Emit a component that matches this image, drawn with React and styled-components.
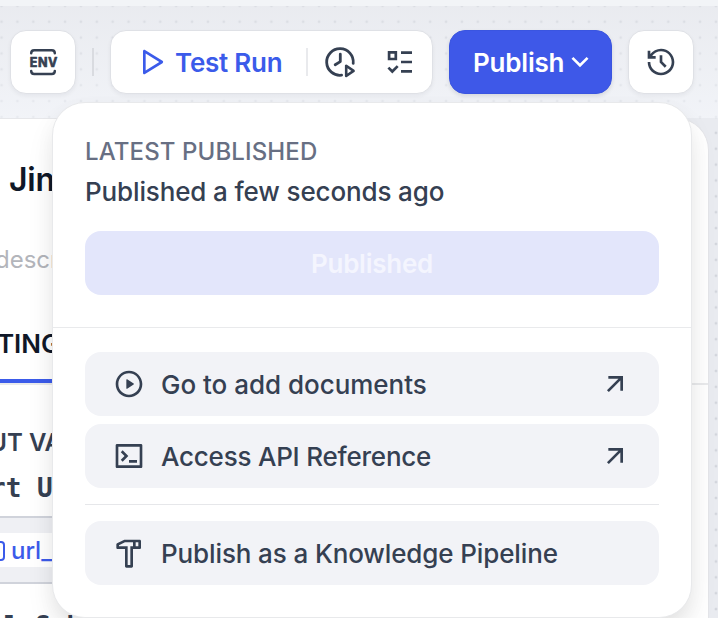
import React from "react";
import styled, { createGlobalStyle, css } from "styled-components";
import {
  RiPlayLargeLine,
  RiHistoryLine,
  RiArrowDownSLine,
  RiPlayCircleLine,
  RiTerminalBoxLine,
  RiHammerLine,
  RiArrowRightUpLine,
} from "react-icons/ri";

const GlobalStyle = createGlobalStyle`
  * { box-sizing: border-box; }
  body {
    margin: 0;
    font-family: Inter, "Liberation Sans", sans-serif;
    color: #354052;
    -webkit-font-smoothing: antialiased;
  }
`;

const Screen = styled.div`
  position: relative;
  display: flex;
  flex-direction: column;
  width: 718px;
  height: 618px;
  overflow: hidden;
  background: #f2f4f7;
  padding-top: 6px;
`;

const Canvas = styled.div`
  flex: 1;
  min-height: 0;
  display: flex;
  flex-direction: column;
  background-color: #e9ebf0;
  background-image: radial-gradient(circle, #d2d5dc 1.1px, transparent 1.7px);
  background-size: 15.89px 15.89px;
  background-position: -6.4px -8.1px;
`;

const Toolbar = styled.header`
  display: flex;
  align-items: flex-start;
  height: 112px;
  flex: none;
  padding: 24px 24px 0 10px;
  background: linear-gradient(rgba(234, 235, 239, 0.3), rgba(247, 249, 253, 0.6));
`;

const surface = css`
  background: #fff;
  border: 1px solid #dfe1e6;
  border-radius: 16px;
  box-shadow: 0 2px 4px rgba(16, 24, 40, 0.05);
`;

const IconButton = styled.button`
  ${surface}
  display: grid;
  place-items: center;
  width: 66px;
  height: 64px;
  padding: 0;
  color: #354052;
`;

const Separator = styled.span`
  width: 2px;
  height: 28px;
  margin: 18px 16px 0;
  background: #d9dbe0;
`;

const RunGroup = styled.div`
  ${surface}
  display: flex;
  align-items: center;
  width: 323px;
  height: 64px;
  padding-left: 24px;
  margin-right: 16px;
`;

const RunButton = styled.div`
  display: flex;
  align-items: center;
  gap: 8px;
  width: 171px;
  font-size: 26px;
  font-weight: 600;
  letter-spacing: -0.25px;
  white-space: nowrap;
  color: #3b5bea;
`;

const GroupDivider = styled.span`
  width: 2px;
  height: 28px;
  background: #e9eaed;
`;

const GroupIcons = styled.div`
  display: flex;
  gap: 28px;
  margin-left: 16px;
`;

const PublishButton = styled.button`
  display: flex;
  align-items: center;
  width: 163px;
  height: 64px;
  padding: 0 0 0 23px;
  margin-right: 16px;
  border: 1px solid #3a55e0;
  border-radius: 16px;
  background: #3e58e8;
  box-shadow: 0 2px 4px rgba(16, 24, 40, 0.12);
  color: #fff;
  font: 600 26px Inter, sans-serif;
  letter-spacing: -0.2px;
`;

const SidePanel = styled.section`
  width: 709px;
  flex: 1;
  min-height: 0;
  display: flex;
  flex-direction: column;
  overflow: hidden;
  white-space: nowrap;
  background: #fff;
  border-top: 1px solid #e6e7ea;
  border-right: 1px solid #e4e5e9;
  border-top-right-radius: 32px;
`;

const PanelTitle = styled.div`
  padding-left: 9px;
  margin-top: 41px;
  height: 40px;
  font-size: 32px;
  line-height: 40px;
  font-weight: 600;
  letter-spacing: -0.2px;
  color: #101828;
`;

const PanelHint = styled.div`
  margin: 40px 0 0 -5px;
  height: 40px;
  font-size: 24px;
  line-height: 40px;
  color: #b3b5bb;
`;

const TabBar = styled.div`
  margin-top: 41px;
  height: 64px;
  flex: none;
  border-bottom: 2px solid #e9eaec;
`;

const Tab = styled.div`
  width: 130px;
  height: 62px;
  margin-left: -44px;
  padding-left: 8px;
  border-bottom: 4px solid #3b5bea;
  font-size: 26px;
  line-height: 46px;
  font-weight: 600;
  color: #101828;
`;

const FieldHeading = styled.div`
  margin: 38px 0 0 -51px;
  height: 40px;
  font-size: 24px;
  line-height: 40px;
  font-weight: 600;
`;

const CodeLine = styled.div`
  margin-left: ${(p) => p.$shift}px;
  margin-top: ${(p) => p.$gap}px;
  height: 40px;
  flex: none;
  font: 700 26px/40px "DejaVu Sans Mono", monospace;
`;

const VariableStrip = styled.div`
  width: 600px;
  margin-top: 8px;
  height: 68px;
  flex: none;
  padding: 15px 0;
  background: #eff0f4;
  border-top: 2px solid #d0d3db;
  border-bottom: 2px solid #d0d3db;
`;

const Variable = styled.div`
  display: flex;
  align-items: center;
  height: 34px;
  gap: 6px;
  padding-top: 1px;
  background: #fff;
  color: #3b5bea;
  font-size: 24px;
  font-weight: 500;
`;

const VariableMark = styled.span`
  width: 16px;
  height: 20px;
  margin-left: -11px;
  border: 2px solid #3b5bea;
  border-radius: 4px;
`;

const Menu = styled.div`
  position: absolute;
  left: 52px;
  top: 102px;
  width: 640px;
  height: 516px;
  background: #fff;
  border: 1px solid #e8e9eb;
  border-radius: 33px;
  box-shadow: 0 16px 32px -6px rgba(9, 9, 11, 0.12), 0 8px 20px rgba(9, 9, 11, 0.04);
`;

const MenuHead = styled.div`
  height: 225px;
  padding: 33px 32px 0;
  border-bottom: 1px solid #e9eaec;
`;

const Caption = styled.div`
  font-size: 24px;
  line-height: 32px;
  font-weight: 500;
  letter-spacing: 0.12px;
  color: #676f83;
`;

const Status = styled.div`
  margin-top: 4px;
  font-size: 26px;
  line-height: 40px;
  font-weight: 500;
  letter-spacing: -0.13px;
`;

const PublishedButton = styled.button`
  display: block;
  width: 574px;
  height: 64px;
  margin-top: 19px;
  padding: 1px 0 0;
  border: 0;
  border-radius: 16px;
  background: #e3e6fb;
  color: #f4f5fe;
  font: 600 26px Inter, sans-serif;
  letter-spacing: -0.25px;
`;

const MenuList = styled.div`
  display: flex;
  flex-direction: column;
  gap: 8px;
  padding: 24px 32px 0;
`;

const MenuRow = styled.div`
  display: flex;
  align-items: center;
  height: 64px;
  padding: 0 28px;
  gap: 16px;
  border-radius: 16px;
  background: #f2f3f7;
  font-size: 26px;
  font-weight: 500;
  white-space: nowrap;
`;

const RowLabel = styled.span`
  flex: 1;
  letter-spacing: ${(p) => p.$track || 0}px;
`;

const MenuRule = styled.div`
  height: 1px;
  margin: 8px 0;
  background: #e6e7ea;
`;

const EnvIcon = () => (
  <svg width="32" height="32" viewBox="0 0 32 32" fill="none" stroke="currentColor" strokeWidth="2.5" strokeLinecap="round" strokeLinejoin="round">
    <path d="M4.2 7.2C4.2 5.2 5.2 4.2 7.2 4.2H24.8C26.8 4.2 27.8 5.2 27.8 7.2M4.2 25C4.2 27 5.2 28 7.2 28H24.8C26.8 28 27.8 27 27.8 25" />
    <text x="2.8" y="20.7" fontFamily="Inter, sans-serif" fontSize="12.5" fontWeight="700" fill="currentColor" strokeWidth="0.7" textLength="27.5" lengthAdjust="spacing">ENV</text>
  </svg>
);

const ClockPlayIcon = () => (
  <svg width="32" height="32" viewBox="0 0 32 32" fill="none" stroke="currentColor" strokeWidth="2.8" strokeLinecap="round" strokeLinejoin="round">
    <path d="M29.2 17.3A13.3 13.3 0 1 0 17.6 29.2M16.3 8.2V15.6L11.2 18.8" />
    <path d="M22.2 19.8V30L29.6 24.9Z" strokeWidth="2.6" />
  </svg>
);

const ChecklistIcon = () => (
  <svg width="32" height="32" viewBox="0 0 32 32" fill="none" stroke="currentColor" strokeWidth="2.7">
    <path d="M5.1 6.3H11.8V13H5.1ZM4.4 21.6L8.3 25.5L13.7 20.1M17 6.7H28M17 16H28M17 25.3H28" />
  </svg>
);

export default function App() {
  return (
    <Screen>
      <GlobalStyle />
      <Canvas>
        <Toolbar>
          <IconButton aria-label="Environment"><EnvIcon /></IconButton>
          <Separator />
          <RunGroup>
            <RunButton>
              <RiPlayLargeLine size={32} />
              Test Run
            </RunButton>
            <GroupDivider />
            <GroupIcons>
              <ClockPlayIcon />
              <ChecklistIcon />
            </GroupIcons>
          </RunGroup>
          <PublishButton>
            Publish
            <RiArrowDownSLine size={32} />
          </PublishButton>
          <IconButton aria-label="History"><RiHistoryLine size={32} /></IconButton>
        </Toolbar>
        <SidePanel>
          <PanelTitle>Jina</PanelTitle>
          <PanelHint>description</PanelHint>
          <TabBar><Tab>ETTINGS</Tab></TabBar>
          <FieldHeading>INPUT VARIABLES</FieldHeading>
          <CodeLine $shift={-10} $gap={5}>rt URL</CodeLine>
          <VariableStrip>
            <Variable><VariableMark />url_input</Variable>
          </VariableStrip>
          <CodeLine $shift={4} $gap={22}>l Sub</CodeLine>
        </SidePanel>
      </Canvas>
      <Menu>
        <MenuHead>
          <Caption>LATEST PUBLISHED</Caption>
          <Status>Published a few seconds ago</Status>
          <PublishedButton>Published</PublishedButton>
        </MenuHead>
        <MenuList>
          <MenuRow>
            <RiPlayCircleLine size={32} />
            <RowLabel $track={-0.02}>Go to add documents</RowLabel>
            <RiArrowRightUpLine size={32} />
          </MenuRow>
          <MenuRow>
            <RiTerminalBoxLine size={32} />
            <RowLabel $track={-0.22}>Access API Reference</RowLabel>
            <RiArrowRightUpLine size={32} />
          </MenuRow>
          <MenuRule />
          <MenuRow>
            <RiHammerLine size={32} />
            <RowLabel $track={-0.12}>Publish as a Knowledge Pipeline</RowLabel>
          </MenuRow>
        </MenuList>
      </Menu>
    </Screen>
  );
}
